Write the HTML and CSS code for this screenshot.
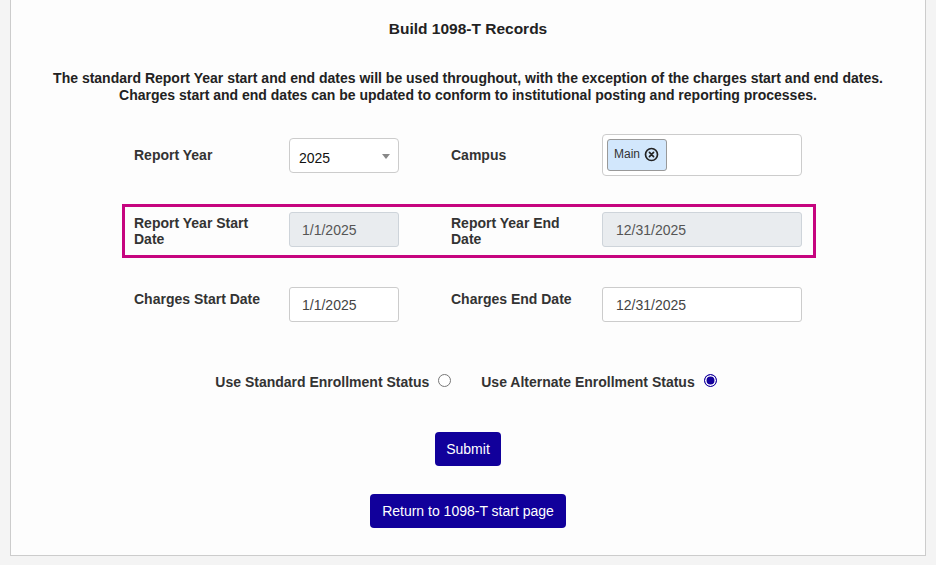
FILE: index.html
```html
<!DOCTYPE html>
<html>

<head>
    <meta charset="UTF-8">
    <title>Build 1098-T Records</title>

    <link rel="stylesheet" href="styles.css">
</head>

<body>
<div class="panel">
    <h1 class="title">Build 1098-T Records</h1>
    <p class="intro">
        The standard Report Year start and end dates will be used throughout, with the exception of the charges start and end dates.<br>
        Charges start and end dates can be updated to conform to institutional posting and reporting processes.
    </p>

    <div class="form">
        <div class="row row-top">
            <label class="field-label">Report Year</label>
            <div class="select-box">
                <span>2025</span>
                <span class="caret"></span>
            </div>
            <label class="field-label">Campus</label>
            <div class="multi-box">
                <span class="chip">Main
                    <svg class="chip-close" width="15" height="15" viewBox="0 0 16 16">
                        <circle cx="8" cy="8" r="6.4" fill="none" stroke="#222" stroke-width="1.8"/>
                        <path d="M5.8 5.8 L10.2 10.2 M10.2 5.8 L5.8 10.2" stroke="#222" stroke-width="1.8" stroke-linecap="round"/>
                    </svg>
                </span>
            </div>
        </div>

        <div class="row row-highlight">
            <label class="field-label">Report Year Start Date</label>
            <div class="text-box disabled">1/1/2025</div>
            <label class="field-label">Report Year End Date</label>
            <div class="text-box disabled wide">12/31/2025</div>
        </div>

        <div class="row row-charges">
            <label class="field-label">Charges Start Date</label>
            <div class="text-box">1/1/2025</div>
            <label class="field-label">Charges End Date</label>
            <div class="text-box wide">12/31/2025</div>
        </div>
    </div>

    <div class="radios">
        <label class="radio-option">Use Standard Enrollment Status <span class="radio"></span></label>
        <label class="radio-option">Use Alternate Enrollment Status <span class="radio checked"></span></label>
    </div>

    <div class="actions">
        <button class="btn">Submit</button>
        <button class="btn btn-return">Return to 1098-T start page</button>
    </div>
</div>
</body>

</html>
```

FILE: styles.css
```css
body {
    margin: 0;
    background: #f4f4f4;
    font-family: "Liberation Sans", Arial, sans-serif;
    color: #333;
}

.panel {
    box-sizing: border-box;
    height: 556px;
    margin: 0 10px;
    padding-top: 21px;
    background: #fdfdfd;
    border: 1px solid #ccc;
    border-top: none;
    text-align: center;
}

.title {
    margin: 0;
    font-size: 15.5px;
    line-height: 16px;
    font-weight: bold;
    color: #222;
}

.intro {
    margin: 33px 0 0;
    font-size: 14px;
    line-height: 17px;
    font-weight: bold;
    color: #222;
}

.form {
    width: 668px;
    margin: 30px auto 0;
    text-align: left;
}

.row {
    display: grid;
    grid-template-columns: 155px 162px 151px 200px;
    align-items: center;
}

.row-top {
    height: 42px;
}

/* highlighted block round the report year dates */
.row-highlight {
    margin: 28px -14px 0 -12px;
    padding: 4px 11px 8px 9px;
    border: 3px solid #c6057f;
}

.row-highlight .field-label {
    padding-top: 4px;
}

.row-charges {
    margin-top: 29px;
    align-items: start;
}

.row-charges .field-label {
    padding-top: 4px;
}

.field-label {
    padding-right: 20px;
    font-size: 14px;
    line-height: 16px;
    font-weight: bold;
    color: #333;
}

.select-box {
    box-sizing: border-box;
    display: flex;
    align-items: center;
    justify-content: space-between;
    align-self: start;
    width: 110px;
    height: 35px;
    margin-top: 4px;
    padding: 5px 8px 0 9px;
    background: #fff;
    border: 1px solid #ccc;
    border-radius: 4px;
    font-size: 14px;
    color: #111;
}

.caret {
    width: 0;
    height: 0;
    margin-top: -3px;
    border-left: 4px solid transparent;
    border-right: 4px solid transparent;
    border-top: 5px solid #888;
}

.multi-box {
    box-sizing: border-box;
    height: 42px;
    padding: 4px;
    background: #fff;
    border: 1px solid #ccc;
    border-radius: 4px;
}

.chip {
    box-sizing: border-box;
    display: inline-flex;
    align-items: flex-start;
    gap: 4px;
    width: 60px;
    height: 32px;
    padding: 6px 0 0 6px;
    background: #d2e7fc;
    border: 1px solid #999;
    border-radius: 3px;
    font-size: 12px;
    line-height: 16px;
    color: #333;
}

.chip-close {
    margin-top: 1px;
}

.text-box {
    box-sizing: border-box;
    width: 110px;
    height: 35px;
    padding: 0 12px;
    background: #fff;
    border: 1px solid #ccc;
    border-radius: 3px;
    font-size: 14px;
    line-height: 34px;
    color: #444;
}

.text-box.wide {
    width: 200px;
    padding-left: 13px;
}

.text-box.disabled {
    background: #e9ecef;
    border-color: #ced4da;
    color: #555;
}

.radios {
    display: flex;
    justify-content: center;
    gap: 30px;
    margin: 52px 0 0 -4px;
    font-size: 14px;
    line-height: 16px;
    font-weight: bold;
    color: #333;
}

.radio-option {
    display: flex;
    align-items: center;
    gap: 9px;
}

.radio {
    box-sizing: border-box;
    display: inline-block;
    width: 13px;
    height: 13px;
    margin-top: -3px;
    border: 1px solid #777;
    border-radius: 50%;
    background: #fff;
}

.radio.checked {
    border: 1.5px solid #13009c;
    box-shadow: inset 0 0 0 1.5px #fff;
    background: #13009c;
}

.actions {
    display: flex;
    flex-direction: column;
    align-items: center;
    gap: 28px;
    margin-top: 42px;
}

.btn {
    height: 34px;
    padding: 0 11px;
    background: #11009b;
    border: none;
    border-radius: 4px;
    font-family: "Liberation Sans", Arial, sans-serif;
    font-size: 14px;
    color: #fff;
}

.btn-return {
    padding: 0 12px;
}
```
